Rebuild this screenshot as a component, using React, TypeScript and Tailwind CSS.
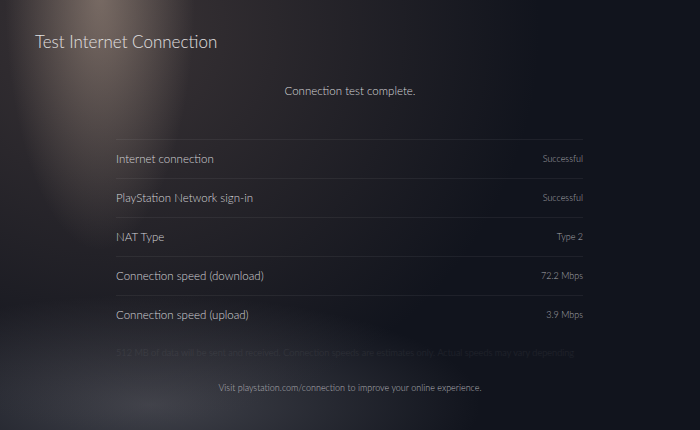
import React from "react";

const rows = [
  { label: "Internet connection", value: "Successful" },
  { label: "PlayStation Network sign-in", value: "Successful" },
  { label: "NAT Type", value: "Type 2" },
  { label: "Connection speed (download)", value: "72.2 Mbps" },
  { label: "Connection speed (upload)", value: "3.9 Mbps" },
];

export default function App() {
  return (
    <div className="w-[700px] h-[430px] overflow-hidden bg-[#11141d] bg-[image:radial-gradient(ellipse_95px_260px_at_100px_-10px,rgba(175,155,140,0.55),transparent),radial-gradient(ellipse_430px_400px_at_110px_30px,rgba(85,72,70,0.6),transparent),radial-gradient(ellipse_330px_110px_at_150px_405px,rgba(85,86,94,0.7),transparent)] font-['Lato','Open_Sans',sans-serif] font-light">
      <h1 className="pl-[35px] pt-[30px] text-[17px] leading-[24px] text-[#e2e0e0] font-light">
        Test Internet Connection
      </h1>
      <p className="mt-[29px] text-center text-[11.5px] leading-[16px] text-[#d6d6da]">
        Connection test complete.
      </p>
      <div className="mt-[40px] ml-[116px] w-[467px]">
        {rows.map((row, i) => (
          <div
            key={i}
            className="h-[39px] flex items-center justify-between border-t border-white/[0.06]"
          >
            <span className="text-[11.5px] text-[#d4d4d8]">{row.label}</span>
            <span className="text-[9px] text-[#a9a9ae]">{row.value}</span>
          </div>
        ))}
      </div>
      <p className="mt-[13px] ml-[116px] w-[467px] whitespace-nowrap text-[9.2px] leading-[12px] text-white/[0.07]">
        512 MB of data will be sent and received. Connection speeds are estimates only. Actual speeds may vary depending
      </p>
      <p className="mt-[23px] text-center text-[9px] leading-[12px] text-[#b4b4ba]">
        Visit playstation.com/connection to improve your online experience.
      </p>
    </div>
  );
}
